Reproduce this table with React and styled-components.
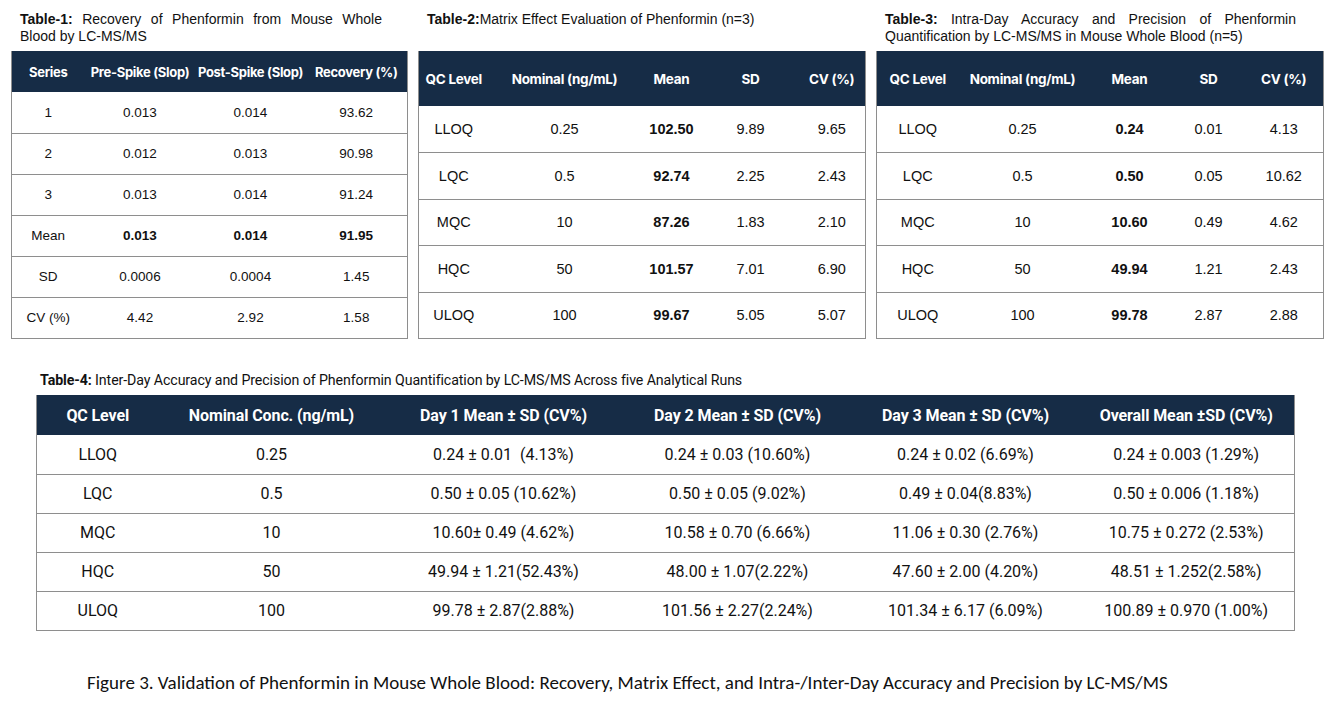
import React from "react";
import styled, { createGlobalStyle } from "styled-components";

const GlobalStyle = createGlobalStyle`
  html, body {
    margin: 0;
    padding: 0;
    background: #ffffff;
  }
  body {
    font-family: "Liberation Sans", Arial, sans-serif;
    color: #111;
  }
`;

const table1 = {
  cols: [73, 111, 110, 102],
  head: ["Series", "Pre-Spike (Slop)", "Post-Spike (Slop)", "Recovery (%)"],
  rows: [
    ["1", "0.013", "0.014", "93.62"],
    ["2", "0.012", "0.013", "90.98"],
    ["3", "0.013", "0.014", "91.24"],
    ["Mean", "0.013", "0.014", "91.95"],
    ["SD", "0.0006", "0.0004", "1.45"],
    ["CV (%)", "4.42", "2.92", "1.58"],
  ],
  bold: (r, c) => r === 3 && c > 0,
};

const table2 = {
  cols: [70, 152, 62, 96, 67],
  head: ["QC Level", "Nominal (ng/mL)", "Mean", "SD", "CV (%)"],
  rows: [
    ["LLOQ", "0.25", "102.50", "9.89", "9.65"],
    ["LQC", "0.5", "92.74", "2.25", "2.43"],
    ["MQC", "10", "87.26", "1.83", "2.10"],
    ["HQC", "50", "101.57", "7.01", "6.90"],
    ["ULOQ", "100", "99.67", "5.05", "5.07"],
  ],
  bold: (r, c) => c === 2,
};

const table3 = {
  cols: [82, 128, 86, 72, 79],
  head: ["QC Level", "Nominal (ng/mL)", "Mean", "SD", "CV (%)"],
  rows: [
    ["LLOQ", "0.25", "0.24", "0.01", "4.13"],
    ["LQC", "0.5", "0.50", "0.05", "10.62"],
    ["MQC", "10", "10.60", "0.49", "4.62"],
    ["HQC", "50", "49.94", "1.21", "2.43"],
    ["ULOQ", "100", "99.78", "2.87", "2.88"],
  ],
  bold: (r, c) => c === 2,
};

const table4 = {
  cols: [122, 226, 238, 230, 226, 216],
  head: [
    "QC Level",
    "Nominal Conc. (ng/mL)",
    "Day 1 Mean \u00b1 SD (CV%)",
    "Day 2 Mean \u00b1 SD (CV%)",
    "Day 3 Mean \u00b1 SD (CV%)",
    "Overall Mean \u00b1SD (CV%)",
  ],
  rows: [
    ["LLOQ", "0.25", "0.24 \u00b1 0.01\u00a0 (4.13%)", "0.24 \u00b1 0.03 (10.60%)", "0.24 \u00b1 0.02 (6.69%)", "0.24 \u00b1 0.003 (1.29%)"],
    ["LQC", "0.5", "0.50 \u00b1 0.05 (10.62%)", "0.50 \u00b1 0.05 (9.02%)", "0.49 \u00b1 0.04(8.83%)", "0.50 \u00b1 0.006 (1.18%)"],
    ["MQC", "10", "10.60\u00b1 0.49 (4.62%)", "10.58 \u00b1 0.70 (6.66%)", "11.06 \u00b1 0.30 (2.76%)", "10.75 \u00b1 0.272 (2.53%)"],
    ["HQC", "50", "49.94 \u00b1 1.21(52.43%)", "48.00 \u00b1 1.07(2.22%)", "47.60 \u00b1 2.00 (4.20%)", "48.51 \u00b1 1.252(2.58%)"],
    ["ULOQ", "100", "99.78 \u00b1 2.87(2.88%)", "101.56 \u00b1 2.27(2.24%)", "101.34 \u00b1 6.17 (6.09%)", "100.89 \u00b1 0.970 (1.00%)"],
  ],
  bold: () => false,
};

function DataTable({ data, headH, rowH, size, headSize, narrow }) {
  const total = data.cols.reduce((a, b) => a + b, 0);
  return (
    <Grid style={{ width: total }}>
      <colgroup>
        {data.cols.map((w, i) => (
          <col key={i} style={{ width: w }} />
        ))}
      </colgroup>
      <thead>
        <tr>
          {data.head.map((h, i) => (
            <HeadCell key={i} $h={headH} $size={headSize} $narrow={narrow}>
              {h}
            </HeadCell>
          ))}
        </tr>
      </thead>
      <tbody>
        {data.rows.map((row, r) => (
          <tr key={r}>
            {row.map((v, c) => (
              <Cell
                key={c}
                $h={rowH}
                $size={size}
                $narrow={narrow}
                $bold={data.bold(r, c)}
              >
                {v}
              </Cell>
            ))}
          </tr>
        ))}
      </tbody>
    </Grid>
  );
}

export default function App() {
  return (
    <Page>
      <GlobalStyle />
      <TopRow>
        <Panel>
          <Caption $w={362} $justify>
            <b>Table-1:</b> Recovery of Phenformin from Mouse Whole Blood by
            LC-MS/MS
          </Caption>
          <DataTable data={table1} headH={41} rowH={41} size={13.5} headSize={13} />
        </Panel>
        <Panel>
          <Caption $w={430}>
            <b>Table-2:</b>Matrix Effect Evaluation of Phenformin (n=3)
          </Caption>
          <DataTable data={table2} headH={55} rowH={46.5} size={14.5} headSize={13.5} />
        </Panel>
        <Panel>
          <Caption $w={411} $justify>
            <b>Table-3:</b> Intra-Day Accuracy and Precision of Phenformin
            Quantification by LC-MS/MS in Mouse Whole Blood (n=5)
          </Caption>
          <DataTable data={table3} headH={55} rowH={46.5} size={14.5} headSize={13.5} />
        </Panel>
      </TopRow>
      <BottomBlock>
        <WideCaption>
          <b>Table-4:</b> Inter-Day Accuracy and Precision of Phenformin
          Quantification by LC-MS/MS Across five Analytical Runs
        </WideCaption>
        <DataTable data={table4} headH={40} rowH={39} size={16} headSize={16} narrow />
      </BottomBlock>
      <Figure>
        Figure 3. Validation of Phenformin in Mouse Whole Blood: Recovery,
        Matrix Effect, and Intra-/Inter-Day Accuracy and Precision by LC-MS/MS
      </Figure>
    </Page>
  );
}

const Page = styled.div`
  width: 1333px;
  height: 711px;
  overflow: hidden;
  background: #fff;
`;

const TopRow = styled.div`
  display: flex;
  gap: 10px;
  padding: 11px 0 0 11px;
`;

const Panel = styled.div`
  display: flex;
  flex-direction: column;
`;

const Caption = styled.div`
  box-sizing: border-box;
  height: 40px;
  width: ${(p) => p.$w + 9}px;
  padding-left: 9px;
  font-family: "Liberation Sans", Arial, sans-serif;
  font-size: 14px;
  line-height: 16.5px;
  color: #111;
  text-align: ${(p) => (p.$justify ? "justify" : "left")};
  text-align-last: left;
  & > b {
    font-weight: 700;
  }
`;

const Grid = styled.table`
  border-collapse: collapse;
  table-layout: fixed;
  border: 1px solid #8e8e8e;
  border-top: none;
`;

const HeadCell = styled.th`
  height: ${(p) => p.$h}px;
  padding: 0;
  background: #162c46;
  color: #fff;
  text-align: center;
  white-space: nowrap;
  font-family: ${(p) =>
    p.$narrow
      ? `"Roboto", "Liberation Sans", sans-serif`
      : `"Inter", "Liberation Sans", sans-serif`};
  font-size: ${(p) => p.$size}px;
  font-weight: 700;
  letter-spacing: ${(p) => (p.$narrow ? "-0.1px" : "-0.3px")};
`;

const Cell = styled.td`
  box-sizing: border-box;
  height: ${(p) => p.$h}px;
  padding: 0;
  text-align: center;
  white-space: nowrap;
  border-top: 1px solid #8e8e8e;
  font-family: ${(p) =>
    p.$narrow
      ? `"Roboto", "Liberation Sans", sans-serif`
      : `"Liberation Sans", Arial, sans-serif`};
  font-size: ${(p) => p.$size}px;
  font-weight: ${(p) => (p.$bold ? 700 : 400)};
  color: #111;
  tr:first-child > & {
    border-top: none;
  }
`;

const BottomBlock = styled.div`
  display: flex;
  flex-direction: column;
  padding: 33px 0 0 36px;
`;

const WideCaption = styled.div`
  height: 23px;
  padding-left: 4px;
  font-family: "Roboto", "Liberation Sans", sans-serif;
  font-size: 14.2px;
  line-height: 16px;
  letter-spacing: -0.1px;
  & > b {
    font-weight: 700;
  }
`;

const Figure = styled.div`
  padding: 40px 0 0 87px;
  font-family: "Carlito", "Lato", "Open Sans", sans-serif;
  font-size: 19px;
  color: #111;
`;
